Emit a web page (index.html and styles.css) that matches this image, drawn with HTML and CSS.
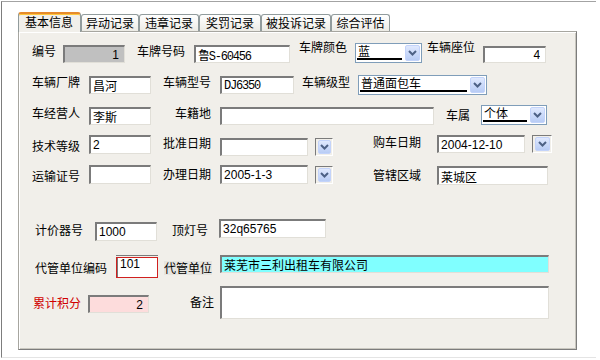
FILE: index.html
```html
<!DOCTYPE html>
<html lang="zh-CN">
<head>
  <meta charset="UTF-8" />
  <title>车辆信息</title>
  <link rel="stylesheet" href="styles.css">
</head>
<body>
  <div class="window">
    <div class="tabs">
      <div class="tab active">基本信息</div>
      <div class="tab t2">异动记录</div>
      <div class="tab t3">违章记录</div>
      <div class="tab t4">奖罚记录</div>
      <div class="tab t5">被投诉记录</div>
      <div class="tab t6">综合评估</div>
    </div>

    <div class="panel">
      <div class="row r1">
        <span class="lbl l-no">编号</span>
        <input class="box gray num f-no" value="1" />
        <span class="lbl l-plate">车牌号码</span>
        <input class="box mono f-plate" value="鲁S-60456" />
        <span class="lbl l-pcolor">车牌颜色</span>
        <div class="combo f-pcolor"><span class="val">蓝</span><span class="drop"><svg width="9" height="6" viewBox="0 0 9 6"><polyline points="1,1 4.5,4.5 8,1" /></svg></span></div>
        <span class="lbl l-seat">车辆座位</span>
        <input class="box num f-seat" value="4" />
      </div>

      <div class="row r2">
        <span class="lbl l-first">车辆厂牌</span>
        <input class="box f-short" value="昌河" />
        <span class="lbl l-mid">车辆型号</span>
        <input class="box mono f-model" value="DJ6350" />
        <span class="lbl l-class">车辆级型</span>
        <div class="combo f-class"><span class="val">普通面包车</span><span class="drop"><svg width="9" height="6" viewBox="0 0 9 6"><polyline points="1,1 4.5,4.5 8,1" /></svg></span></div>
      </div>

      <div class="row r3">
        <span class="lbl l-first">车经营人</span>
        <input class="box f-short" value="李斯" />
        <span class="lbl l-home">车籍地</span>
        <input class="box f-home" value="" />
        <span class="lbl l-owner">车属</span>
        <div class="combo f-owner"><span class="val">个体</span><span class="drop"><svg width="9" height="6" viewBox="0 0 9 6"><polyline points="1,1 4.5,4.5 8,1" /></svg></span></div>
      </div>

      <div class="row r4">
        <span class="lbl l-first l-low">技术等级</span>
        <input class="box f-short f-tall f-grade" value="2" />
        <span class="lbl l-mid l-approve">批准日期</span>
        <input class="box f-date f-approve" value="" />
        <span class="cal c-approve"><span class="drop"><svg width="9" height="6" viewBox="0 0 9 6"><polyline points="1,1 4.5,4.5 8,1" /></svg></span></span>
        <span class="lbl l-right l-buy">购车日期</span>
        <input class="box f-date f-right" value="2004-12-10" />
        <span class="cal c-buy"><span class="drop"><svg width="9" height="6" viewBox="0 0 9 6"><polyline points="1,1 4.5,4.5 8,1" /></svg></span></span>
      </div>

      <div class="row r5">
        <span class="lbl l-first l-low">运输证号</span>
        <input class="box f-short f-tall" value="" />
        <span class="lbl l-mid l-handle">办理日期</span>
        <input class="box f-date f-tall" value="2005-1-3" />
        <span class="cal c-handle"><span class="drop"><svg width="9" height="6" viewBox="0 0 9 6"><polyline points="1,1 4.5,4.5 8,1" /></svg></span></span>
        <span class="lbl l-right l-area">管辖区域</span>
        <input class="box f-tall f-right f-area" value="莱城区" />
      </div>

      <div class="row r6">
        <span class="lbl l-meter">计价器号</span>
        <input class="box f-tall f-meter" value="1000" />
        <span class="lbl l-lamp">顶灯号</span>
        <input class="box f-tall f-lamp" value="32q65765" />
      </div>

      <div class="row r7">
        <span class="lbl l-code">代管单位编码</span>
        <div class="code"><span class="code-in">101</span></div>
        <span class="lbl l-unit">代管单位</span>
        <input class="box cyan f-unit" value="莱芜市三利出租车有限公司" />
      </div>

      <div class="row r8">
        <span class="lbl l-score">累计积分</span>
        <input class="box pink num f-score" value="2" />
        <span class="lbl l-note">备注</span>
        <textarea class="box f-note"></textarea>
      </div>
    </div>
  </div>
</body>
</html>
```

FILE: styles.css
```css
body {
  margin: 0;
  background: #fff;
  font-family: "Noto Sans CJK SC", "Liberation Sans", sans-serif;
  font-size: 12px;
  color: #000;
}
.window {
  box-sizing: border-box;
  width: 595px;
  height: 357px;
  margin: 1px 0 0 1px;
  border-top: 1px solid #a3a3a3;
  border-left: 1px solid #7d7d7d;
  border-bottom: 1px solid #e4e4e4;
}

/* tabs */
.tabs {
  position: relative;
  z-index: 1;
  display: flex;
  align-items: flex-end;
  height: 20px;
  margin: 10px 0 0 16px;
}
.tab {
  box-sizing: border-box;
  display: flex;
  align-items: center;
  justify-content: center;
  height: 17px;
  margin-bottom: 1px;
  border: 1px solid #919b9c;
  border-bottom: none;
  border-radius: 3px 3px 0 0;
  background: linear-gradient(#fff, #ecebe5);
  line-height: 14px;
}
.tab.active {
  width: 63px;
  height: 20px;
  margin-bottom: 0;
  padding: 0 0 2px 6px;
  justify-content: flex-start;
  border-top: 2px solid #e68b2c;
  box-shadow: inset 0 1px #ffc73c;
  background: #f1efea;
}
.t2 { width: 58px; }
.t3 { width: 60px; }
.t4 { width: 62px; }
.t5 { width: 70px; }
.t6 { width: 59px; }

.panel {
  box-sizing: border-box;
  width: 559px;
  height: 319px;
  margin: -1px 0 0 16px;
  padding-top: 8px;
  background: #f1efea;
  border: 1px solid;
  border-color: #a7a6a0 #7c7c7c #7c7c7c #a7a6a0;
  box-shadow: inset 1px 1px #fff, inset -1px -1px #c9c7bf;
}

/* rows */
.row {
  display: flex;
  align-items: flex-start;
}
.r1 { height: 23px; }
.r2 { height: 21px; margin-top: 11px; }
.r3 { height: 21px; margin-top: 10px; }
.r4 { height: 21px; margin-top: 9px; }
.r5 { height: 20px; margin-top: 9px; }
.r6 { height: 22px; margin-top: 34px; }
.r7 { height: 23px; margin-top: 14px; }
.r8 { height: 33px; margin-top: 8px; }

.lbl {
  flex: none;
  line-height: 14px;
  white-space: nowrap;
}

/* fields */
.box {
  flex: none;
  box-sizing: border-box;
  height: 18px;
  margin: 0;
  padding: 0 2px;
  border-style: solid;
  border-width: 2px 1px 1px 2px;
  border-color: #7b7b7b #e1dfd8 #e1dfd8 #7b7b7b;
  background: #fff;
  font: 12px/14px "Liberation Sans", "Noto Sans CJK SC", sans-serif;
  color: #000;
  outline: none;
}
.num {
  text-align: right;
  padding-right: 5px;
}
.mono {
  font-family: "Liberation Mono", "Noto Sans CJK SC", monospace;
  letter-spacing: -1.2px;
}
.gray { background: #c0c0c0; }
.cyan { background: #80ffff; }
.pink { background: #fddcdc; }
.f-tall { height: 19px; }

.combo {
  flex: none;
  box-sizing: border-box;
  display: flex;
  height: 20px;
  padding: 1px;
  border: 1px solid #7f9db9;
  background: #fff;
}
.combo .val {
  flex: 1;
  margin: 0 3px 1px 0;
  padding-left: 1px;
  border-bottom: 2px solid #000;
  line-height: 11px;
  white-space: nowrap;
}
.drop {
  box-sizing: border-box;
  display: flex;
  align-items: center;
  justify-content: center;
  width: 15px;
  border: 1px solid #c3d3fa;
  border-radius: 2px;
  background: linear-gradient(#e0e9fe, #b8ccf5);
}
.drop svg polyline {
  fill: none;
  stroke: #4d6185;
  stroke-width: 2;
}
.cal {
  flex: none;
  box-sizing: border-box;
  display: flex;
  height: 18px;
  padding: 1px 1px 1px 2px;
  border-style: solid;
  border-width: 1px;
  border-color: #7b7b7b #fff #fff #7b7b7b;
}
.cal .drop { flex: 1; }

/* row 1 */
.l-no { margin: 4px 0 0 13px; }
.f-no { width: 62px; margin: 5px 0 0 7px; }
.l-plate { margin: 4px 0 0 12px; }
.f-plate { width: 96px; margin: 5px 0 0 9px; }
.l-pcolor { margin: 0 0 0 9px; }
.f-pcolor { width: 67px; margin: 3px 0 0 8px; }
.l-seat { margin: 0 0 0 5px; }
.f-seat { width: 63px; height: 17px; margin: 6px 0 0 8px; }

/* rows 2-5 share the same columns */
.l-first { margin: 1px 0 0 13px; }
.f-short { width: 62px; margin: 2px 0 0 9px; }
.l-mid { margin: 1px 0 0 12px; }
.f-model { width: 74px; margin: 2px 0 0 9px; }
.l-class { margin: 1px 0 0 8px; }
.f-class { width: 129px; margin: 1px 0 0 8px; }

.l-home { margin: 1px 0 0 24px; }
.f-home { width: 214px; margin: 2px 0 0 9px; }
.l-owner { margin: 3px 0 0 12px; }
.f-owner { width: 66px; margin: 0 0 0 11px; }

.l-low { margin-top: 4px; }
.f-grade { margin-top: 1px; }
.l-approve { margin-top: 1px; }
.f-date { width: 88px; margin: 0 0 0 9px; }
.f-approve { margin-top: 3px; }
.c-approve { width: 18px; margin: 3px 0 0 7px; }
.l-right { margin: 0 0 0 40px; }
.f-right { margin: 0 0 0 16px; }
.c-buy { width: 20px; margin: 0 0 0 7px; }

.f-short.f-tall { margin-top: 0; }
.l-handle { margin-top: 2px; }
.c-handle { width: 18px; margin: 1px 0 0 7px; }
.l-area { margin-top: 3px; }
.f-area { width: 111px; margin-top: 1px; }

/* lower block */
.l-meter { margin: 4px 0 0 16px; }
.f-meter { width: 62px; margin: 3px 0 0 12px; }
.l-lamp { margin: 4px 0 0 15px; }
.f-lamp { width: 107px; margin: 0 0 0 11px; }

.l-code { margin: 6px 0 0 16px; }
.code {
  flex: none;
  box-sizing: border-box;
  width: 42px;
  height: 23px;
  margin-left: 9px;
  padding-top: 1px;
  border-top: 1px solid #7b7b7b;
}
.code-in {
  box-sizing: border-box;
  display: block;
  height: 21px;
  padding-left: 3px;
  border: 1px solid #d0201f;
  box-shadow: inset 1px 0 #7b7b7b;
  background: #fff;
  font-family: "Liberation Sans", sans-serif;
  line-height: 12px;
}
.l-unit {
  margin: 6px 0 0 6px;
  background: #e6e5e0;
}
.f-unit { width: 329px; margin: 0 0 0 8px; }

.l-score { margin: 10px 0 0 14px; color: #d00000; }
.f-score { width: 61px; margin: 9px 0 0 7px; }
.l-note { margin: 9px 0 0 41px; }
.f-note { width: 329px; height: 33px; margin: 0 0 0 6px; resize: none; }
```
